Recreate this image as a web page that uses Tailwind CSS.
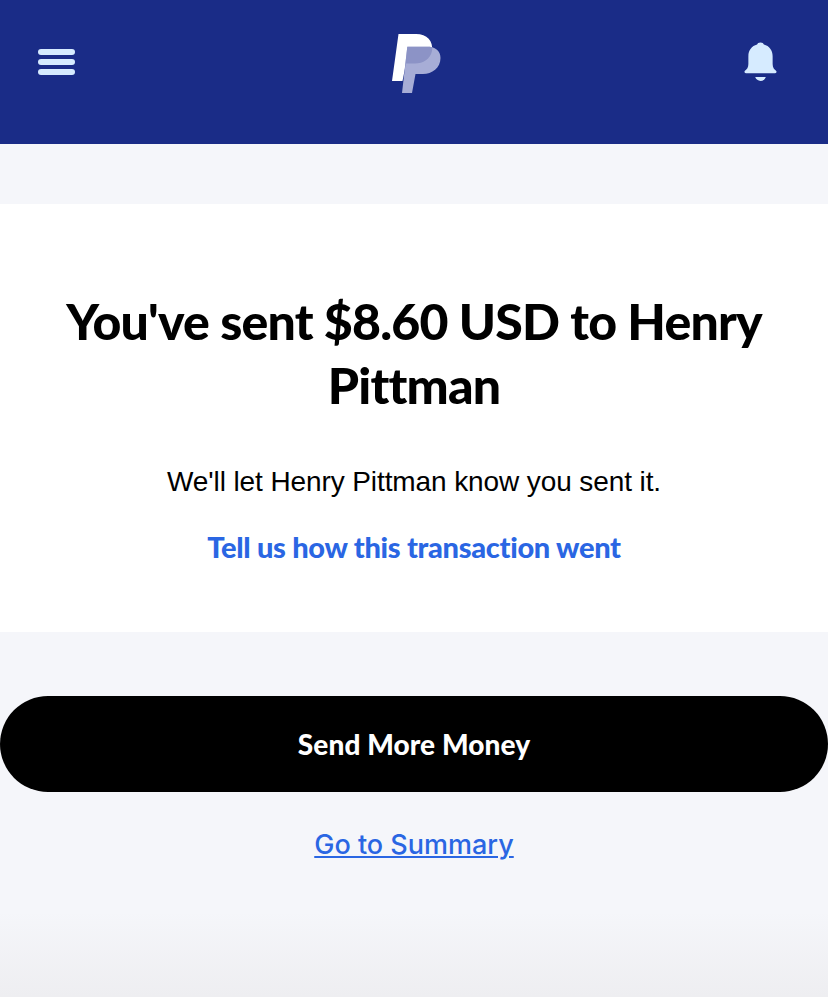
<!DOCTYPE html>
<html>
<head>
<meta charset="UTF-8">
<script src="https://cdn.jsdelivr.net/npm/@tailwindcss/browser@4"></script>
</head>
<body class="bg-[#f5f6fa]">
<div class="relative h-[997px] w-[828px] overflow-hidden font-['Liberation_Sans',sans-serif]">
  <header class="flex h-[144px] items-start justify-between bg-[#1a2c87] pt-[34px] pl-[38px] pr-[51px]">
    <div class="mt-[15px] flex w-[37px] flex-col gap-[4px]">
      <div class="h-[6px] rounded-full bg-[#d6ebff]"></div>
      <div class="h-[6px] rounded-full bg-[#d6ebff]"></div>
      <div class="h-[6px] rounded-full bg-[#d6ebff]"></div>
    </div>
    <svg class="ml-[13px] w-[49px] h-[59px]" viewBox="0 0 49 59" fill="none">
      <defs>
        <clipPath id="front-p"><path d="M6.500 0 H24 C35 0 41.500 7 40 17 C38.500 25 31 29.500 23 29.500 H14 L10.500 47 H0 Z"/></clipPath>
      </defs>
      <path d="M6.500 0 H24 C35 0 41.500 7 40 17 C38.500 25 31 29.500 23 29.500 H14 L10.500 47 H0 Z" fill="#fff"/>
      <path d="M15.300 12.700 H38 C44 14 48.500 17 48.500 24 C48.500 34 40 40 31 40 H23.500 L20 59 H10 Z" fill="#a7add6"/>
      <path d="M15.300 12.700 H38 C44 14 48.500 17 48.500 24 C48.500 34 40 40 31 40 H23.500 L20 59 H10 Z" fill="#8c93c6" clip-path="url(#front-p)"/>
    </svg>
    <svg class="mt-[8px] w-[33px] h-[40px]" viewBox="0 0 34 40">
      <path d="M17 0 C19 0 20 1 20.500 2 C26 3.500 29.500 8 29.500 14 V22 C29.500 25.500 31 27.500 33 29 C34 30 33.500 31.500 32 31.500 H2 C0.500 31.500 0 30 1 29 C3 27.500 4.500 25.500 4.500 22 V14 C4.500 8 8 3.500 13.500 2 C14 1 15 0 17 0 Z" fill="#d6ebff"/>
      <path d="M11.500 35.500 H22.500 C21.500 38 19.500 39.500 17 39.500 C14.500 39.500 12.500 38 11.500 35.500 Z" fill="#d6ebff"/>
    </svg>
  </header>

  <main class="mt-[60px] flex h-[428px] flex-col items-center bg-white px-[40px] pt-[85px]">
    <h1 class="w-[720px] text-center font-['Lato',sans-serif] text-[50px] leading-[64px] font-black tracking-[-0.8px] text-black">You've sent $8.60 USD to Henry Pittman</h1>
    <p class="mt-[47px] text-[28px] leading-[36px] tracking-[-0.1px] text-black">We'll let Henry Pittman know you sent it.</p>
    <a class="mt-[29px] font-['Lato',sans-serif] text-[29px] leading-[36px] font-black tracking-[-0.3px] text-[#2a66e3]">Tell us how this transaction went</a>
  </main>

  <div class="mt-[64px] flex flex-col items-center">
    <button class="h-[96px] w-full rounded-full bg-black font-['Lato',sans-serif] text-[28px] font-black tracking-[0.1px] text-white">Send More Money</button>
    <a class="mt-[35px] font-['Inter',sans-serif] text-[27px] leading-[36px] font-medium text-[#2a66e3] underline">Go to Summary</a>
  </div>

  <div class="absolute inset-x-0 bottom-0 h-[85px] bg-gradient-to-b from-[#f5f6fa] to-[#eeeef1]"></div>
</div>
</body>
</html>
